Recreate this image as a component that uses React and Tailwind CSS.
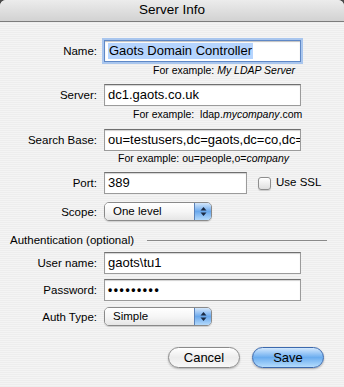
import React from "react";

const font = { fontFamily: '"Liberation Sans", Arial, sans-serif' };

function Label({ children }) {
  return (
    <div className="w-[97px] shrink-0 text-right text-[11.5px] leading-[14px] text-black">
      {children}
    </div>
  );
}

function Field({ w = "w-[197px]", focused = false, children }) {
  return (
    <div
      className={`${w} ml-[7px] h-[22px] flex items-center bg-white overflow-hidden whitespace-nowrap text-[13px] text-black pl-[3px] ${
        focused
          ? "border border-[#5f88c6] shadow-[0_0_0_2px_#a9c6ee,inset_0_1px_1px_rgba(0,0,0,0.25)]"
          : "border border-[#9b9b9b] border-t-[#6f6f6f] shadow-[inset_0_1px_1px_rgba(0,0,0,0.18)]"
      }`}
    >
      {children}
    </div>
  );
}

function Popup({ children }) {
  return (
    <div className="ml-[7px] w-[108px] h-[19px] flex rounded-[5px] border border-[#8a8a8a] overflow-hidden shadow-[0_1px_1px_rgba(0,0,0,0.15)]">
      <div className="flex-1 flex items-center pl-[8px] text-[11.5px] text-black bg-gradient-to-b from-[#ffffff] via-[#f6f6f6] to-[#e6e6e6]">
        {children}
      </div>
      <div className="w-[17px] flex items-center justify-center border-l border-[#5b82b8] bg-gradient-to-b from-[#d4e7fb] via-[#6aa8ec] to-[#b3d9fb]">
        <svg width="7" height="11" viewBox="0 0 7 11">
          <path d="M3.5 1 L6.5 4.5 L0.5 4.5 Z" fill="#1a2a44" />
          <path d="M3.5 10 L6.5 6.5 L0.5 6.5 Z" fill="#1a2a44" />
        </svg>
      </div>
    </div>
  );
}

export default function App() {
  return (
    <div className="w-[344px] h-[387px] bg-[#4a4a4a]" style={font}>
      <div className="w-full h-full rounded-t-[6px] overflow-hidden flex flex-col bg-[repeating-linear-gradient(to_bottom,#ededed_0px,#ededed_1px,#f4f4f4_1px,#f4f4f4_2px)]">
        <div className="h-[22px] shrink-0 flex items-center justify-center bg-gradient-to-b from-[#ececec] to-[#d2d2d2] border-b border-[#7c7c7c] text-[13.5px] text-black">
          Server Info
        </div>

        <div className="pt-[18px] flex flex-col">
          <div className="flex items-center">
            <Label>Name:</Label>
            <Field focused>
              <span className="bg-[#b5d4fe] leading-[16px] px-[1px]">Gaots Domain Controller</span>
            </Field>
          </div>
          <div className="ml-[153px] mt-[2px] text-[10.5px] leading-[13px] text-black">
            For example: <i>My LDAP Server</i>
          </div>

          <div className="flex items-center mt-[7px]">
            <Label>Server:</Label>
            <Field>dc1.gaots.co.uk</Field>
          </div>
          <div className="ml-[133px] mt-[2px] text-[10.5px] leading-[13px] text-black whitespace-pre">
            For example:  ldap.<i>mycompany</i>.com
          </div>

          <div className="flex items-center mt-[8px]">
            <Label>Search Base:</Label>
            <Field>ou=testusers,dc=gaots,dc=co,dc=uk</Field>
          </div>
          <div className="ml-[118px] mt-[1px] text-[10.5px] leading-[13px] text-black">
            For example: ou=people,o=<i>company</i>
          </div>

          <div className="flex items-center mt-[7px]">
            <Label>Port:</Label>
            <Field w="w-[143px]">389</Field>
            <div className="ml-[11px] w-[13px] h-[13px] rounded-[3px] border border-[#8e8e8e] bg-gradient-to-b from-[#ffffff] to-[#dedede] shadow-[0_1px_1px_rgba(0,0,0,0.15)]" />
            <div className="ml-[5px] text-[11.5px] text-black">Use SSL</div>
          </div>

          <div className="flex items-center mt-[8px]">
            <Label>Scope:</Label>
            <Popup>One level</Popup>
          </div>

          <div className="flex items-center mt-[12px] pl-[10px] pr-[17px]">
            <div className="text-[11.5px] leading-[14px] text-black whitespace-nowrap">
              Authentication (optional)
            </div>
            <div className="flex-1 ml-[13px] h-px bg-[#8a8a8a]" />
          </div>

          <div className="flex items-center mt-[5px]">
            <Label>User name:</Label>
            <Field>gaots\tu1</Field>
          </div>

          <div className="flex items-center mt-[5px]">
            <Label>Password:</Label>
            <Field>
              <span className="tracking-[1.6px] font-bold text-[12px]">•••••••••</span>
            </Field>
          </div>

          <div className="flex items-center mt-[6px]">
            <Label>Auth Type:</Label>
            <Popup>Simple</Popup>
          </div>

          <div className="flex justify-end pr-[20px] gap-[12px] mt-[21px]">
            <div className="w-[72px] h-[21px] rounded-full border border-[#8a8a8a] flex items-center justify-center text-[13px] text-black bg-gradient-to-b from-[#ffffff] via-[#ececec] to-[#f8f8f8] shadow-[0_1px_2px_rgba(0,0,0,0.25)]">
              Cancel
            </div>
            <div className="w-[72px] h-[21px] rounded-full border border-[#3c69ad] flex items-center justify-center text-[13px] text-black bg-gradient-to-b from-[#d3e8fd] via-[#6badef] to-[#b4dcfc] shadow-[0_1px_2px_rgba(0,0,0,0.3)]">
              Save
            </div>
          </div>
        </div>
      </div>
    </div>
  );
}
